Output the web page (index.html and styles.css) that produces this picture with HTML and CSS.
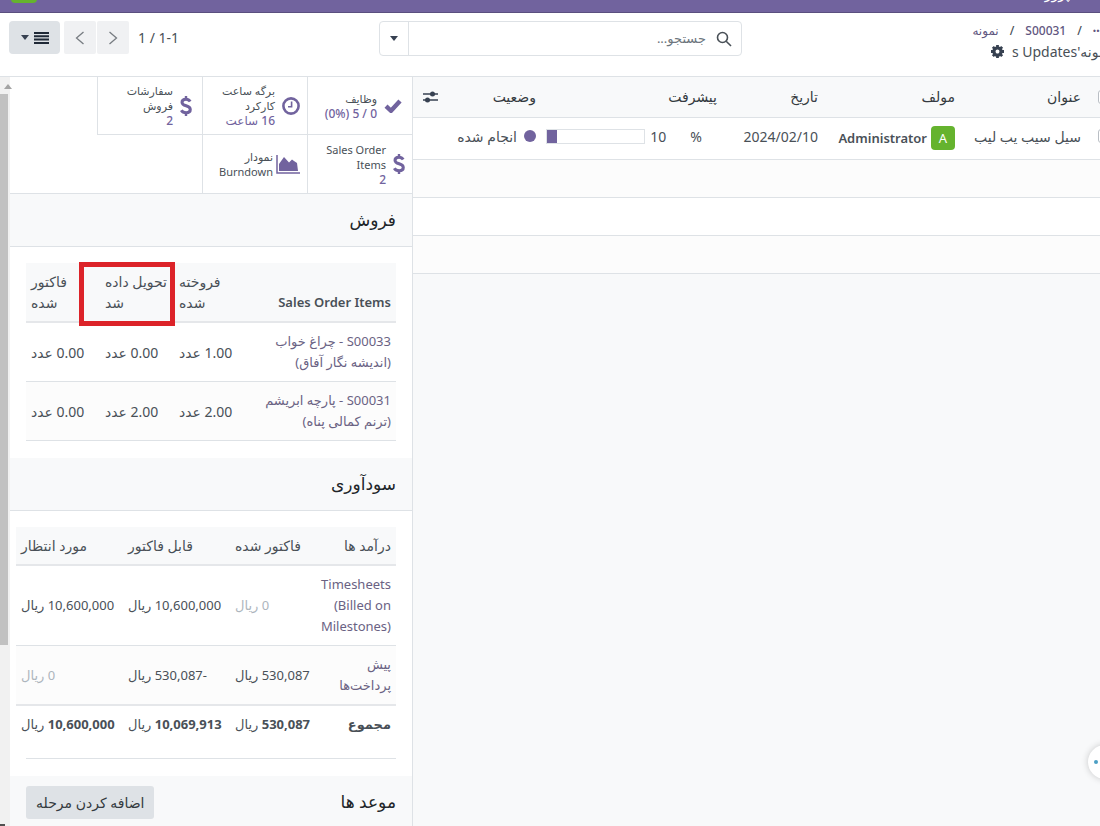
FILE: index.html
```html
<!DOCTYPE html>
<html lang="fa" dir="rtl">
<head>
<meta charset="utf-8">
<title>نمونه's Updates</title>
<link rel="stylesheet" href="styles.css">
</head>
<body>
<div class="app">
  <nav class="navbar"><span class="nav-text">پروژه</span><span class="nav-badge"></span></nav>

  <header class="control-panel">
    <div class="crumbs">
      <div class="crumb-row"><a href="#" class="dots">•••</a><span class="sep">/</span><a href="#">S00031</a><span class="sep">/</span><a href="#">نمونه</a></div>
      <div class="crumb-current"><span>نمونه's Updates</span>
        <svg class="gear" viewBox="0 0 16 16" width="13" height="13"><path fill="none" stroke="#374151" stroke-width="4" d="M8 3.6a4.4 4.4 0 1 0 0 8.800a4.400 4.400 0 1 0 0-8.800z"/><path stroke="#374151" stroke-width="3.400" d="M8 0v3M8 13v3M0 8h3M13 8h3M2.300 2.300l2.200 2.200M11.500 11.500l2.200 2.200M2.300 13.700l2.200-2.200M11.500 4.500l2.200-2.200"/></svg>
      </div>
    </div>
    <div class="search">
      <svg viewBox="0 0 16 16" width="16" height="16" fill="none" stroke="#495057" stroke-width="1.600"><circle cx="6.500" cy="6.500" r="5"/><path d="M10.200 10.200L15 15"/></svg>
      <input type="text" placeholder="جستجو..." aria-label="جستجو">
      <button class="search-toggle" aria-label="فیلترها"><span class="caret"></span></button>
    </div>
    <div class="tools">
      <span class="pager">1-1 / 1</span>
      <div class="pager-buttons">
        <button aria-label="بعدی"><svg viewBox="0 0 10 14" width="10" height="14"><path d="M1.500 1l7 6-7 6" fill="none" stroke="#777c82" stroke-width="1.300"/></svg></button>
        <button aria-label="قبلی"><svg viewBox="0 0 10 14" width="10" height="14"><path d="M8.500 1l-7 6 7 6" fill="none" stroke="#777c82" stroke-width="1.300"/></svg></button>
      </div>
      <button class="view-switch" aria-label="نما">
        <svg viewBox="0 0 15 12" width="15" height="12"><path d="M0 1h15M0 4.300h15M0 7.600h15M0 11h15" stroke="#1f2937" stroke-width="2"/></svg>
        <span class="caret"></span>
      </button>
    </div>
  </header>

  <div class="content">
    <main class="list">
      <table class="updates">
        <colgroup><col class="c-check"><col><col class="c-author"><col class="c-date"><col class="c-progress"><col class="c-status"><col class="c-opt"></colgroup>
        <thead>
          <tr><th><input type="checkbox" aria-label="انتخاب همه"></th><th>عنوان</th><th>مولف</th><th>تاریخ</th><th>پیشرفت</th><th>وضعیت</th>
          <th><svg class="sliders" viewBox="0 0 15 12" width="15" height="12"><path d="M0 3h15M0 9h15" stroke="#374151" stroke-width="1.300"/><circle cx="9.500" cy="3" r="2.500" fill="#374151"/><circle cx="4.500" cy="9" r="2.500" fill="#374151"/></svg></th></tr>
        </thead>
        <tbody>
          <tr class="record"><td><input type="checkbox" aria-label="انتخاب"></td><td>سیل سیب یب لیب</td>
          <td class="author-cell"><div class="author"><span class="avatar">A</span><span>Administrator</span></div></td>
          <td>2024/02/10</td>
          <td><div class="progress"><span class="percent">%</span><span class="value">10</span><div class="bar"><div class="fill" style="width:10%"></div></div></div></td>
          <td><div class="status"><span class="dot"></span><span>انجام شده</span></div></td><td></td></tr>
          <tr class="blank odd"><td colspan="7"></td></tr>
          <tr class="blank"><td colspan="7"></td></tr>
          <tr class="blank odd"><td colspan="7"></td></tr>
        </tbody>
      </table>
    </main>

    <aside class="side">
      <div class="panel">
        <div class="stats">
          <button class="stat roomy"><svg viewBox="0 0 18 14" width="18" height="14"><path d="M2 7.200l5 4.600L16 2" fill="none" stroke="#71639e" stroke-width="4.400"/></svg><span>وظایف<b>0 / 5 (0%)</b></span></button>
          <button class="stat"><svg viewBox="0 0 18 18" width="18" height="18" fill="none" stroke="#71639e"><circle cx="9" cy="9" r="7.600" stroke-width="2.600"/><path d="M9.600 4.500v5.300H6" stroke-width="1.600"/></svg><span>برگه ساعت<br>کارکرد<b>16 ساعت</b></span></button>
          <button class="stat roomy"><svg viewBox="0 0 12 22" width="12" height="22" fill="none" stroke="#71639e"><path d="M10.200 6.500C9.300 5 7.800 4.200 6 4.200c-2.400 0-4 1.200-4 3 0 4.700 8.300 2.500 8.300 7.200 0 2-1.700 3.300-4.200 3.300-2 0-3.800-.8-4.800-2.500" stroke-width="3"/><path d="M6 1v4M6 17v4" stroke-width="2.400"/></svg><span>سفارشات<br>فروش<b>2</b></span></button>
          <button class="stat"><svg viewBox="0 0 12 22" width="12" height="22" fill="none" stroke="#71639e"><path d="M10.200 6.500C9.300 5 7.800 4.200 6 4.200c-2.400 0-4 1.200-4 3 0 4.700 8.300 2.500 8.300 7.200 0 2-1.700 3.300-4.200 3.300-2 0-3.800-.8-4.800-2.500" stroke-width="3"/><path d="M6 1v4M6 17v4" stroke-width="2.400"/></svg><span>Sales Order<br>Items<b>2</b></span></button>
          <button class="stat chart"><svg viewBox="0 0 24 19" width="24" height="19"><path d="M1 0v18h23" fill="none" stroke="#71639e" stroke-width="1.500"/><path d="M3 16V9l5-7 5 5.500 3-3 2 1.500 3 2 1 8z" fill="#71639e"/></svg><span>نمودار<br>Burndown</span></button>
        </div>

        <section>
          <div class="section-head"><h2>فروش</h2></div>
          <div class="section-body">
            <table class="data sales">
              <colgroup><col><col class="c-qty"><col class="c-qty"><col class="c-qty"></colgroup>
              <thead><tr><th class="latin">Sales Order Items</th><th>فروخته<br>شده</th><th class="marked">تحویل داده<br>شد<span class="marker"></span></th><th>فاکتور<br>شده</th></tr></thead>
              <tbody>
                <tr><td><a href="#">S00033 - چراغ خواب<br>(اندیشه نگار آفاق)</a></td><td>1.00 عدد</td><td>0.00 عدد</td><td>0.00 عدد</td></tr>
                <tr class="odd"><td><a href="#">S00031 - پارچه ابریشم<br>(ترنم کمالی پناه)</a></td><td>2.00 عدد</td><td>2.00 عدد</td><td>0.00 عدد</td></tr>
              </tbody>
            </table>
          </div>
        </section>

        <section>
          <div class="section-head"><h2>سودآوری</h2></div>
          <div class="section-body">
            <table class="data profit">
              <colgroup><col><col class="c-invoiced"><col class="c-amount"><col class="c-amount"></colgroup>
              <thead><tr><th>درآمد ها</th><th>فاکتور شده</th><th>قابل فاکتور</th><th>مورد انتظار</th></tr></thead>
              <tbody>
                <tr><td><a href="#" dir="ltr">Timesheets<br>(Billed on<br>Milestones)</a></td><td class="muted">0 ریال</td><td>10,600,000 ریال</td><td>10,600,000 ریال</td></tr>
                <tr class="odd"><td><a href="#">پیش<br>پرداخت‌ها</a></td><td>530,087 ریال</td><td>-530,087 ریال</td><td class="muted">0 ریال</td></tr>
              </tbody>
              <tfoot><tr><td>مجموع</td><td>530,087 <span class="unit">ریال</span></td><td>10,069,913 <span class="unit">ریال</span></td><td>10,600,000 <span class="unit">ریال</span></td></tr></tfoot>
            </table>
            <hr>
          </div>
        </section>

        <section>
          <div class="section-head"><h2>موعد ها</h2><button class="add">اضافه کردن مرحله</button></div>
        </section>
      </div>
      <div class="scrollbar"><span class="arrow-up"></span><span class="thumb"></span><span class="arrow-down"></span></div>
    </aside>
  </div>
</div>
<button class="chat" aria-label="گفتگو"><span></span></button>
</body>
</html>
```
FILE: styles.css
```css
* { box-sizing: border-box; }
html, body { height: 100%; }
body {
  margin: 0;
  overflow: hidden;
  background: #f8f9fa;
  color: #495057;
  font: 14px/21px "Noto Sans", "DejaVu Sans", sans-serif;
}
a { color: #6a6283; text-decoration: none; }
button, input { font: inherit; color: inherit; margin: 0; }
button { border: 0; background: none; padding: 0; }
svg { flex: none; display: block; }

/* The canvas runs 20px past the window's right edge. */
.app { display: flex; flex-direction: column; height: 100vh; margin-right: -20px; }

.navbar {
  display: flex; justify-content: space-between; align-items: flex-end;
  flex: none; height: 13px; padding: 0 50px 0 11px; overflow: hidden;
  background: #71639e; border-bottom: 1px solid #5a4f7f;
}
.nav-text { color: #fff; line-height: 20px; margin-bottom: 8px; }
.nav-badge { width: 26px; height: 20px; margin-bottom: 9px; border-radius: 4px; background: #65b32e; }

.control-panel {
  display: grid; grid-template-columns: 378px 363px 1fr;
  flex: none; height: 64px; background: #fff; border-bottom: 1px solid #dee2e6;
}
.crumbs { padding-top: 7px; white-space: nowrap; }
.crumb-row { display: flex; align-items: center; gap: 11px; font-size: 12px; font-weight: 500; padding-right: 17px; }
.crumb-row a { color: #5f5680; }
.crumb-row .dots { font-size: 9px; }
.crumb-current { display: flex; align-items: center; gap: 8px; padding-right: 9px; }
.search {
  display: flex; align-items: center; height: 35px; margin-top: 8px; padding-right: 9px;
  border: 1px solid #dee2e6; border-radius: 4px;
}
.search input { flex: 1; min-width: 0; border: 0; outline: 0; background: none; padding: 0 10px; font-size: 13px; }
.search input::placeholder { color: #6c757d; opacity: 1; }
.search-toggle { width: 29px; height: 100%; border-right: 1px solid #dee2e6; display: grid; place-items: center; }
.caret { border: 4px solid transparent; border-top: 5px solid #374151; border-bottom: 0; }
.tools { display: flex; align-items: center; justify-content: flex-end; height: 33px; margin-top: 8px; padding-left: 9px; }
.pager { margin-left: 9px; }
.pager-buttons { display: flex; gap: 1px; margin-left: 4px; }
.pager-buttons button { width: 32px; height: 33px; display: grid; place-items: center; background: #f0f1f3; border-radius: 2px; }
.view-switch { display: flex; align-items: center; justify-content: center; gap: 5px; width: 51px; height: 33px; background: #dee2e6; border-radius: 4px; }

.content { display: flex; flex: 1; min-height: 0; }
.list { flex: 1; min-width: 0; }
.updates { width: 100%; table-layout: fixed; border-collapse: collapse; background: #fff; }
.updates th, .updates td { padding: 0 5px; text-align: right; border-bottom: 1px solid #dee2e6; white-space: nowrap; }
.updates th { height: 40px; font-weight: 500; color: #343a40; background: #f8f9fa; }
.updates .record td { height: 42px; padding-bottom: 4px; }
.updates .record .author-cell { padding-bottom: 0; }
.updates .blank td { height: 38px; }
.updates input { display: block; width: 14px; height: 14px; margin-right: 3px; appearance: none; border: 1px solid #b9bec4; border-radius: 3px; background: #fff; }
.odd { background: #fcfcfc; }
.c-check { width: 34px; }
.c-author { width: 137px; }
.c-date { width: 101px; }
.c-progress { width: 181px; }
.c-status { width: 96px; }
.c-opt { width: 32px; }
.sliders { margin-right: 2px; }
.author, .progress, .status { display: flex; align-items: center; }
.author { gap: 4px; font-size: 13px; font-weight: 600; }
.avatar { width: 24px; height: 24px; border-radius: 4px; background: #65b32e; color: #fff; line-height: 24px; text-align: center; font-weight: 400; }
.percent { margin-right: 15px; }
.value { margin: 0 24px 0 5px; }
.bar { flex: none; width: 99px; height: 15px; border: 1px solid #dee2e6; direction: ltr; }
.fill { height: 100%; background: #71639e; }
.status { gap: 7px; }
.dot { width: 12px; height: 12px; border-radius: 50%; background: #71639e; }

.side { display: flex; width: 413px; overflow: hidden; background: #fff; border-right: 1px solid #dee2e6; }
.panel { flex: 1; min-width: 0; }
.scrollbar { display: flex; flex-direction: column; flex: none; width: 10px; background: #f1f1f1; align-items: flex-end; }
.arrow-up { width: 8px; height: 5px; margin: 7px 0 5px 4px; border: 4px solid transparent; border-bottom: 5px solid #a3a3a3; border-top: 0; }
.thumb { width: 8px; height: 551px; max-height: 90%; background: #c1c1c1; }
.arrow-down { width: 5px; height: 2px; margin-top: auto; background: #505050; }

.stats { display: grid; grid-template-columns: repeat(3, 105px); border-bottom: 1px solid #dee2e6; }
.stat {
  display: flex; align-items: center; gap: 7px; height: 58px; padding: 0 7px 0 0;
  border-left: 1px solid #dee2e6; border-bottom: 1px solid #dee2e6;
  font-size: 11px; line-height: 15px; text-align: right; white-space: nowrap;
}
.stat:nth-child(n+4) { border-bottom: 0; }
.stat.roomy { padding-right: 10px; }
.stat b { display: block; font-size: 12px; font-weight: 500; color: #71639e; line-height: 15px; }
.stat.chart { gap: 3px; }

.section-head { display: flex; align-items: center; justify-content: space-between; height: 53px; padding: 0 16px; background: #f8f9fa; border-bottom: 1px solid #dee2e6; }
h2 { margin: 0; font-size: 17px; line-height: 24px; font-weight: 500; color: #212529; }
.section-body { padding: 16px 16px 17px; }
.data { table-layout: fixed; border-collapse: collapse; width: 100%; }
.data th, .data td { padding: 8px 5px; text-align: left; white-space: nowrap; border-bottom: 1px solid #dee2e6; font-weight: 400; }
.data th { font-weight: 500; background: #f8f9fa; border-bottom: 2px solid #e5e7ea; vertical-align: bottom; }
.data th:first-child, .data td:first-child { text-align: right; padding-left: 0; }
.data .latin { font-size: 13px; font-weight: 600; }
.data a { display: block; font-size: 13px; }
.data .muted { color: #adb5bd; }
.c-qty { width: 74px; }
.sales td { height: 59px; }
.profit { width: calc(100% + 10px); }
.profit td { font-size: 13px; }
.c-invoiced { width: 86px; }
.c-amount { width: 107px; }
.profit tbody tr:last-child td { border-bottom: 2px solid #e5e7ea; }
.profit tfoot td { font-weight: 700; border-bottom: 0; padding-right: 0; }
.profit tfoot td:first-child { padding-right: 5px; }
.unit { font-weight: 400; }
.marked { position: relative; }
.marker { position: absolute; inset: -1px -1px -5px -21px; border: 5px solid #dc2329; }
hr { margin: 15px 0 0; border: 0; border-top: 1px solid #dee2e6; }
.add { height: 33px; padding: 0 10px; border-radius: 3px; background: #dee2e6; color: #343a40; }

.chat { position: absolute; right: -22px; bottom: 47px; width: 34px; height: 34px; border-radius: 50%; background: #fff; box-shadow: 0 0 7px rgba(0, 0, 0, .2); }
.chat span { display: block; width: 4px; height: 4px; margin-right: 24px; border-radius: 50%; background: #4b9fc4; }
```
